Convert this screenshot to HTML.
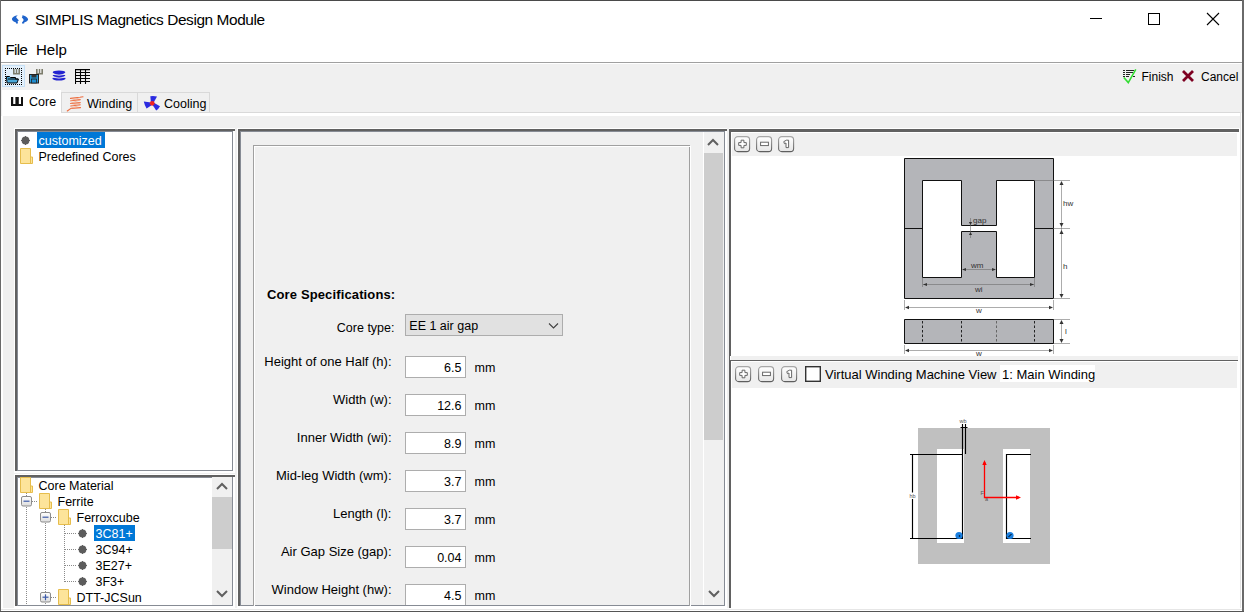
<!DOCTYPE html>
<html><head><meta charset="utf-8">
<style>
html,body{margin:0;padding:0;}
body{width:1244px;height:612px;overflow:hidden;position:relative;background:#fff;font-family:"Liberation Sans",sans-serif;color:#000;}
.a{position:absolute;}
.t{position:absolute;white-space:nowrap;line-height:1;}
.bg{background:#f0f0f0;}
.lbl{position:absolute;white-space:nowrap;line-height:1;font-size:12.5px;text-align:right;}
.fld{position:absolute;left:405px;width:59px;height:20px;background:#fff;border:1px solid #adadad;}
.fld span{position:absolute;right:4px;top:6px;font-size:12.5px;line-height:1;}
.mm{position:absolute;left:475px;font-size:12.5px;line-height:1;}
.zb{position:absolute;width:14px;height:14px;border:1px solid #7a7a7a;border-radius:4px;background:linear-gradient(#fcfcfc,#e6e6e6);}
</style></head><body>
<!-- window frame -->
<div class="a" style="left:0;top:0;width:1244px;height:1px;background:#4a4a4a"></div>
<div class="a" style="left:0;top:0;width:1px;height:612px;background:#6a6a6a"></div>
<div class="a" style="left:1242px;top:0;width:2px;height:612px;background:#6a6a6a"></div>

<!-- title -->
<svg class="a" style="left:10px;top:12px" width="20" height="14" viewBox="0 0 20 14"><polygon points="6.1,3.5 3.9,4.5 2.7,5.5 2.0,6.5 2.0,7.5 2.5,8.5 3.7,9.5 6.0,10.5 6.0,11.5 7.9,11.5 7.9,10.5 7.5,9.5 8.8,8.5 8.0,7.5 7.1,6.5 6.2,5.5 6.4,4.5 7.8,3.5" fill="#1f64cc"/><polygon points="12.1,3.5 12.4,4.5 11.8,5.5 12.8,6.5 13.5,7.5 13.5,8.5 12.8,9.5 12.0,10.5 12.0,11.5 14.2,11.5 14.2,10.5 16.5,9.5 17.6,8.5 18.1,7.5 17.8,6.5 17.0,5.5 15.8,4.5 13.7,3.5" fill="#1f64cc"/></svg>
<div class="t" style="left:35px;top:11.9px;font-size:15.4px;letter-spacing:-0.4px">SIMPLIS Magnetics Design Module</div>
<div class="a" style="left:1090px;top:18px;width:12px;height:1px;background:#000"></div>
<div class="a" style="left:1148px;top:13px;width:10px;height:10px;border:1px solid #000"></div>
<svg class="a" style="left:1206px;top:12px" width="14" height="14" viewBox="0 0 14 14"><path d="M1 1L13 13M13 1L1 13" stroke="#000" stroke-width="1.1"/></svg>

<!-- menu -->
<div class="t" style="left:5.5px;top:42px;font-size:15px;letter-spacing:-0.6px">File</div>
<div class="t" style="left:36px;top:42px;font-size:15px;">Help</div>
<div class="a" style="left:1px;top:62px;width:1241px;height:1px;background:#a0a0a0"></div>

<!-- toolbar / content bg -->
<div class="a bg" style="left:1px;top:64px;width:1241px;height:548px"></div>
<div class="a" style="left:2px;top:65px;width:21px;height:20px;background:#e3f0fb;border:1px solid #c6e0f6"></div>


<!-- toolbar icons -->
<svg class="a" style="left:5px;top:68px" width="17" height="17" viewBox="0 0 17 17">
<g fill="#000"><rect x="0" y="0" width="1" height="1"/><rect x="2" y="0" width="1" height="1"/><rect x="4" y="0" width="1" height="1"/><rect x="6" y="0" width="1" height="1"/><rect x="8" y="0" width="1" height="1"/><rect x="10" y="0" width="1" height="1"/><rect x="12" y="0" width="1" height="1"/><rect x="14" y="0" width="1" height="1"/><rect x="16" y="0" width="1" height="1"/>
<rect x="0" y="16" width="1" height="1"/><rect x="2" y="16" width="1" height="1"/><rect x="4" y="16" width="1" height="1"/><rect x="6" y="16" width="1" height="1"/><rect x="8" y="16" width="1" height="1"/><rect x="10" y="16" width="1" height="1"/><rect x="12" y="16" width="1" height="1"/><rect x="14" y="16" width="1" height="1"/><rect x="16" y="16" width="1" height="1"/>
<rect x="0" y="2" width="1" height="1"/><rect x="0" y="4" width="1" height="1"/><rect x="0" y="6" width="1" height="1"/><rect x="0" y="8" width="1" height="1"/><rect x="0" y="10" width="1" height="1"/><rect x="0" y="12" width="1" height="1"/><rect x="0" y="14" width="1" height="1"/>
<rect x="16" y="2" width="1" height="1"/><rect x="16" y="4" width="1" height="1"/><rect x="16" y="6" width="1" height="1"/><rect x="16" y="8" width="1" height="1"/><rect x="16" y="10" width="1" height="1"/><rect x="16" y="12" width="1" height="1"/><rect x="16" y="14" width="1" height="1"/></g>
<path d="M8 1h1.6v4h1.2v-4h1.4v4h1.2v-4h1.6v5.6h-7z" fill="#7c7c6c"/>
<path d="M1.5 8.5h3l1 1h5v1.5h3l-1.5 4h-10z" fill="#4aa8d8" stroke="#000" stroke-width="1"/>
<path d="M3 11h10" stroke="#000" stroke-width="1"/>
</svg>
<svg class="a" style="left:29px;top:68px" width="16" height="16" viewBox="0 0 16 16">
<path d="M7 1h1.6v4h1.2v-4h1.4v4h1.2v-4h1.6v5.6h-7z" fill="#7c7c6c"/>
<rect x="0.5" y="6.5" width="9" height="8.5" fill="#2a9ad6" stroke="#222" stroke-width="1"/>
<rect x="2.5" y="7" width="5" height="2.5" fill="#333"/>
<rect x="2.5" y="11" width="5" height="4" fill="#1e8cd0" stroke="#222" stroke-width="0.8"/>
</svg>
<svg class="a" style="left:52px;top:70px" width="14" height="12" viewBox="0 0 14 12">
<ellipse cx="7" cy="2.3" rx="6.3" ry="1.9" fill="#2424d0"/>
<ellipse cx="7" cy="5.6" rx="6.3" ry="1.5" fill="#2424d0"/>
<ellipse cx="7" cy="8.6" rx="6.6" ry="1.9" fill="#2424d0"/>
<path d="M1 4.3q6 1.8 12 0M1 7.2q6 1.8 12 0" stroke="#f0f0f0" stroke-width="0.9" fill="none"/>
</svg>
<svg class="a" style="left:75px;top:69px" width="16" height="16" viewBox="0 0 16 16">
<g stroke="#000" stroke-width="1.1" fill="none"><path d="M0.5 0v15M5.5 0v15M10.5 0v15"/><path d="M0 0.6h15M0 3.5h15M0 6.5h15M0 9.5h15M0 12.5h15"/></g>
</svg>
<!-- finish / cancel icons -->
<svg class="a" style="left:1122px;top:68px" width="16" height="17" viewBox="0 0 16 17">
<g fill="#222"><rect x="1" y="2" width="2" height="1"/><rect x="4" y="2" width="8" height="1"/><rect x="1" y="4" width="2" height="1"/><rect x="4" y="4" width="7" height="1"/><rect x="1" y="6" width="2" height="1"/><rect x="4" y="6" width="4" height="1"/><rect x="1" y="8" width="2" height="1"/><rect x="4" y="8" width="3" height="1"/><rect x="11" y="8" width="2" height="1"/></g>
<path d="M1.8 9.5L6.3 14.6L13.8 1.4" stroke="#33dd33" stroke-width="1.6" fill="none"/>
</svg>
<svg class="a" style="left:1181px;top:69px" width="14" height="14" viewBox="0 0 14 14">
<path d="M2 2L12 12M12 2L2 12" stroke="#7d0021" stroke-width="2.8"/>
</svg>
<!-- finish / cancel -->
<div class="t" style="left:1141.5px;top:71px;font-size:12px;">Finish</div>
<div class="t" style="left:1201px;top:71px;font-size:12px;">Cancel</div>

<!-- tabs -->
<div class="a" style="left:2px;top:90px;width:59px;height:26px;background:#fff"></div>
<div class="a" style="left:61px;top:92px;width:75px;height:20px;border:1px solid #d9d9d9;border-bottom:none"></div>
<div class="a" style="left:137px;top:92px;width:71px;height:20px;border:1px solid #d9d9d9;border-bottom:none"></div>
<div class="a" style="left:61px;top:112px;width:1180px;height:1px;background:#d9d9d9"></div>
<div class="a" style="left:2px;top:113px;width:1238px;height:3px;background:#fff"></div>
<div class="a" style="left:1240px;top:112px;width:1px;height:500px;background:#e3e3e3"></div>
<div class="a" style="left:1241px;top:113px;width:1px;height:498px;background:#fff"></div>
<div class="a" style="left:1px;top:116px;width:2px;height:493px;background:#fff"></div>
<div class="t" style="left:29px;top:96px;font-size:12.5px;">Core</div>
<div class="t" style="left:87px;top:98px;font-size:12.5px;">Winding</div>
<div class="t" style="left:164px;top:98px;font-size:12.5px;">Cooling</div>


<!-- ===== left top tree ===== -->
<div class="a" style="left:14px;top:128px;width:221px;height:345px;background:#fff"></div>
<div class="a" style="left:15px;top:129px;width:220px;height:2px;background:#616161"></div>
<div class="a" style="left:15px;top:129px;width:2px;height:342px;background:#616161"></div>
<div class="a" style="left:17px;top:131px;width:216px;height:1px;background:#868b94"></div>
<div class="a" style="left:17px;top:131px;width:1px;height:340px;background:#868b94"></div>
<div class="a" style="left:232px;top:131px;width:1px;height:340px;background:#868b94"></div>
<div class="a" style="left:17px;top:470px;width:216px;height:1px;background:#868b94"></div>
<!-- ===== left bottom tree ===== -->
<div class="a" style="left:14px;top:474px;width:221px;height:134px;background:#fff"></div>
<div class="a" style="left:15px;top:475px;width:220px;height:2px;background:#616161"></div>
<div class="a" style="left:15px;top:475px;width:2px;height:131px;background:#616161"></div>
<div class="a" style="left:17px;top:477px;width:216px;height:1px;background:#868b94"></div>
<div class="a" style="left:17px;top:477px;width:1px;height:129px;background:#868b94"></div>
<div class="a" style="left:232px;top:477px;width:1px;height:129px;background:#868b94"></div>
<div class="a" style="left:17px;top:605px;width:216px;height:1px;background:#868b94"></div>
<svg class="a" style="left:20px;top:135px" width="11" height="11" viewBox="0 0 11 11"><circle cx="5.5" cy="5.5" r="3.9" fill="#5c5c5c"/><path d="M5.5 1v9M1 5.5h9" stroke="#5c5c5c" stroke-width="1"/></svg>
<div class="a" style="left:37px;top:132px;width:68px;height:16px;background:#0078d7"></div>
<div class="t" style="left:38.5px;top:135.2px;font-size:12.5px;color:#fff">customized</div>
<svg class="a" style="left:20px;top:148px" width="14" height="16" viewBox="0 0 14 16"><defs><linearGradient id="fg" x1="0" y1="0" x2="1" y2="1"><stop offset="0" stop-color="#fff0b8"/><stop offset="1" stop-color="#fcdc80"/></linearGradient></defs><path d="M0.5 0.5h10v8.5h2v6.5h-12z" fill="#fde49a" stroke="#e6bd4c" stroke-width="1"/><path d="M10.5 9v6.5" stroke="#e6bd4c" stroke-width="1"/></svg>
<div class="t" style="left:38.5px;top:151.2px;font-size:12.5px;color:#000">Predefined Cores</div>
<div class="a" style="left:0;top:0;width:1244px;height:605px;overflow:hidden">
<div class="a" style="left:26px;top:493px;width:1px;height:112px;background:repeating-linear-gradient(#8a8a8a 0 1px,transparent 1px 2px)"></div>
<svg class="a" style="left:20px;top:477px" width="14" height="16" viewBox="0 0 14 16"><defs><linearGradient id="fg" x1="0" y1="0" x2="1" y2="1"><stop offset="0" stop-color="#fff0b8"/><stop offset="1" stop-color="#fcdc80"/></linearGradient></defs><path d="M0.5 0.5h10v8.5h2v6.5h-12z" fill="#fde49a" stroke="#e6bd4c" stroke-width="1"/><path d="M10.5 9v6.5" stroke="#e6bd4c" stroke-width="1"/></svg>
<div class="t" style="left:38.5px;top:480.2px;font-size:12.5px;color:#000">Core Material</div>
<div class="a" style="left:32px;top:501px;width:6px;height:1px;background:repeating-linear-gradient(90deg,#8a8a8a 0 1px,transparent 1px 2px)"></div>
<svg class="a" style="left:21px;top:496px" width="12" height="11" viewBox="0 0 12 11"><defs><linearGradient id="eb" x1="0" y1="0" x2="0" y2="1"><stop offset="0" stop-color="#ffffff"/><stop offset="1" stop-color="#dcdcdc"/></linearGradient></defs><rect x="0.5" y="0.5" width="10" height="9.5" rx="1.5" fill="url(#eb)" stroke="#8c8c8c"/><path d="M2.5 5.2h6" stroke="#3c5aa8" stroke-width="1.2"/></svg>
<svg class="a" style="left:39px;top:493px" width="14" height="16" viewBox="0 0 14 16"><defs><linearGradient id="fg" x1="0" y1="0" x2="1" y2="1"><stop offset="0" stop-color="#fff0b8"/><stop offset="1" stop-color="#fcdc80"/></linearGradient></defs><path d="M0.5 0.5h10v8.5h2v6.5h-12z" fill="#fde49a" stroke="#e6bd4c" stroke-width="1"/><path d="M10.5 9v6.5" stroke="#e6bd4c" stroke-width="1"/></svg>
<div class="t" style="left:57.5px;top:496.2px;font-size:12.5px;color:#000">Ferrite</div>
<div class="a" style="left:45px;top:509px;width:1px;height:96px;background:repeating-linear-gradient(#8a8a8a 0 1px,transparent 1px 2px)"></div>
<div class="a" style="left:51px;top:517px;width:6px;height:1px;background:repeating-linear-gradient(90deg,#8a8a8a 0 1px,transparent 1px 2px)"></div>
<svg class="a" style="left:40px;top:512px" width="12" height="11" viewBox="0 0 12 11"><defs><linearGradient id="eb" x1="0" y1="0" x2="0" y2="1"><stop offset="0" stop-color="#ffffff"/><stop offset="1" stop-color="#dcdcdc"/></linearGradient></defs><rect x="0.5" y="0.5" width="10" height="9.5" rx="1.5" fill="url(#eb)" stroke="#8c8c8c"/><path d="M2.5 5.2h6" stroke="#3c5aa8" stroke-width="1.2"/></svg>
<svg class="a" style="left:58px;top:509px" width="14" height="16" viewBox="0 0 14 16"><defs><linearGradient id="fg" x1="0" y1="0" x2="1" y2="1"><stop offset="0" stop-color="#fff0b8"/><stop offset="1" stop-color="#fcdc80"/></linearGradient></defs><path d="M0.5 0.5h10v8.5h2v6.5h-12z" fill="#fde49a" stroke="#e6bd4c" stroke-width="1"/><path d="M10.5 9v6.5" stroke="#e6bd4c" stroke-width="1"/></svg>
<div class="t" style="left:76.5px;top:512.2px;font-size:12.5px;color:#000">Ferroxcube</div>
<div class="a" style="left:64px;top:525px;width:1px;height:57px;background:repeating-linear-gradient(#8a8a8a 0 1px,transparent 1px 2px)"></div>
<div class="a" style="left:65px;top:533px;width:11px;height:1px;background:repeating-linear-gradient(90deg,#8a8a8a 0 1px,transparent 1px 2px)"></div>
<svg class="a" style="left:77px;top:528px" width="11" height="11" viewBox="0 0 11 11"><circle cx="5.5" cy="5.5" r="3.9" fill="#5c5c5c"/><path d="M5.5 1v9M1 5.5h9" stroke="#5c5c5c" stroke-width="1"/></svg>
<div class="a" style="left:94px;top:525px;width:41px;height:16px;background:#0078d7"></div>
<div class="t" style="left:95.5px;top:528.2px;font-size:12.5px;color:#fff">3C81+</div>
<div class="a" style="left:65px;top:549px;width:11px;height:1px;background:repeating-linear-gradient(90deg,#8a8a8a 0 1px,transparent 1px 2px)"></div>
<svg class="a" style="left:77px;top:544px" width="11" height="11" viewBox="0 0 11 11"><circle cx="5.5" cy="5.5" r="3.9" fill="#5c5c5c"/><path d="M5.5 1v9M1 5.5h9" stroke="#5c5c5c" stroke-width="1"/></svg>
<div class="t" style="left:95.5px;top:544.2px;font-size:12.5px;color:#000">3C94+</div>
<div class="a" style="left:65px;top:565px;width:11px;height:1px;background:repeating-linear-gradient(90deg,#8a8a8a 0 1px,transparent 1px 2px)"></div>
<svg class="a" style="left:77px;top:560px" width="11" height="11" viewBox="0 0 11 11"><circle cx="5.5" cy="5.5" r="3.9" fill="#5c5c5c"/><path d="M5.5 1v9M1 5.5h9" stroke="#5c5c5c" stroke-width="1"/></svg>
<div class="t" style="left:95.5px;top:560.2px;font-size:12.5px;color:#000">3E27+</div>
<div class="a" style="left:65px;top:581px;width:11px;height:1px;background:repeating-linear-gradient(90deg,#8a8a8a 0 1px,transparent 1px 2px)"></div>
<svg class="a" style="left:77px;top:576px" width="11" height="11" viewBox="0 0 11 11"><circle cx="5.5" cy="5.5" r="3.9" fill="#5c5c5c"/><path d="M5.5 1v9M1 5.5h9" stroke="#5c5c5c" stroke-width="1"/></svg>
<div class="t" style="left:95.5px;top:576.2px;font-size:12.5px;color:#000">3F3+</div>
<div class="a" style="left:51px;top:597px;width:6px;height:1px;background:repeating-linear-gradient(90deg,#8a8a8a 0 1px,transparent 1px 2px)"></div>
<svg class="a" style="left:40px;top:592px" width="12" height="11" viewBox="0 0 12 11"><defs><linearGradient id="eb" x1="0" y1="0" x2="0" y2="1"><stop offset="0" stop-color="#ffffff"/><stop offset="1" stop-color="#dcdcdc"/></linearGradient></defs><rect x="0.5" y="0.5" width="10" height="9.5" rx="1.5" fill="url(#eb)" stroke="#8c8c8c"/><path d="M2.5 5.2h6" stroke="#3c5aa8" stroke-width="1.2"/><path d="M5.5 2.3v6" stroke="#3c5aa8" stroke-width="1.2"/></svg>
<svg class="a" style="left:58px;top:589px" width="14" height="16" viewBox="0 0 14 16"><defs><linearGradient id="fg" x1="0" y1="0" x2="1" y2="1"><stop offset="0" stop-color="#fff0b8"/><stop offset="1" stop-color="#fcdc80"/></linearGradient></defs><path d="M0.5 0.5h10v8.5h2v6.5h-12z" fill="#fde49a" stroke="#e6bd4c" stroke-width="1"/><path d="M10.5 9v6.5" stroke="#e6bd4c" stroke-width="1"/></svg>
<div class="t" style="left:76.5px;top:592.2px;font-size:12.5px;color:#000">DTT-JCSun</div>
</div>
<!-- scrollbar bottom tree -->
<div class="a bg" style="left:212px;top:477px;width:20px;height:128px"></div>
<div class="a" style="left:212px;top:497px;width:20px;height:52px;background:#cdcdcd"></div>
<svg class="a" style="left:216px;top:482px" width="12" height="9" viewBox="0 0 12 9"><path d="M1 7L6 2L11 7" stroke="#606060" stroke-width="2" fill="none"/></svg>
<svg class="a" style="left:216px;top:589px" width="12" height="9" viewBox="0 0 12 9"><path d="M1 2L6 7L11 2" stroke="#606060" stroke-width="2" fill="none"/></svg>

<!-- ===== middle panel ===== -->
<div class="a" style="left:237px;top:128px;width:490px;height:480px;background:#fff"></div>
<div class="a" style="left:241px;top:132px;width:483px;height:473px;background:#f0f0f0"></div>
<div class="a" style="left:238px;top:129px;width:489px;height:2px;background:#616161"></div>
<div class="a" style="left:238px;top:129px;width:2px;height:477px;background:#616161"></div>
<div class="a" style="left:240px;top:131px;width:485px;height:1px;background:#868b94"></div>
<div class="a" style="left:240px;top:131px;width:1px;height:475px;background:#868b94"></div>
<div class="a" style="left:724px;top:131px;width:1px;height:475px;background:#868b94"></div>
<div class="a" style="left:240px;top:605px;width:485px;height:1px;background:#868b94"></div>
<!-- etched titled border -->
<div class="a" style="left:253px;top:145px;width:435px;height:460px;border-left:1px solid #a0a0a0;border-top:1px solid #a0a0a0;border-right:1px solid #a0a0a0"></div>
<div class="a" style="left:254px;top:146px;width:435px;height:459px;border-left:1px solid #fff;border-top:1px solid #fff;border-right:1px solid #fff"></div>
<div class="a" style="left:0;top:0;width:703px;height:605px;overflow:hidden">
<div class="t" style="left:267.0px;top:288.4px;font-size:13px;color:#000;font-weight:bold;letter-spacing:0.13px">Core Specifications:</div>
<div class="t" style="left:394.5px;transform:translateX(-100%);top:322.1px;font-size:12.5px;color:#000;font-weight:normal">Core type:</div>
<div class="a" style="left:405px;top:314px;width:156px;height:20px;background:#e1e1e1;border:1px solid #adadad"></div>
<div class="t" style="left:409.3px;top:319.6px;font-size:12.5px;color:#000;font-weight:normal">EE 1 air gap</div>
<svg class="a" style="left:548px;top:321px" width="12" height="9" viewBox="0 0 12 9"><path d="M1 2.5L5.5 7L10 2.5" stroke="#404040" stroke-width="1.1" fill="none"/></svg>
<div class="t" style="left:391.5px;transform:translateX(-100%);top:355.2px;font-size:13px;color:#000;font-weight:normal">Height of one Half (h):</div>
<div class="fld" style="top:356px"></div>
<div class="t" style="left:461.5px;transform:translateX(-100%);top:361.7px;font-size:12.5px;color:#000;font-weight:normal">6.5</div>
<div class="t" style="left:474.6px;top:361.7px;font-size:12.5px;color:#000;font-weight:normal">mm</div>
<div class="t" style="left:391.5px;transform:translateX(-100%);top:393.2px;font-size:13px;color:#000;font-weight:normal">Width (w):</div>
<div class="fld" style="top:394px"></div>
<div class="t" style="left:461.5px;transform:translateX(-100%);top:399.7px;font-size:12.5px;color:#000;font-weight:normal">12.6</div>
<div class="t" style="left:474.6px;top:399.7px;font-size:12.5px;color:#000;font-weight:normal">mm</div>
<div class="t" style="left:391.5px;transform:translateX(-100%);top:431.2px;font-size:13px;color:#000;font-weight:normal">Inner Width (wi):</div>
<div class="fld" style="top:432px"></div>
<div class="t" style="left:461.5px;transform:translateX(-100%);top:437.7px;font-size:12.5px;color:#000;font-weight:normal">8.9</div>
<div class="t" style="left:474.6px;top:437.7px;font-size:12.5px;color:#000;font-weight:normal">mm</div>
<div class="t" style="left:391.5px;transform:translateX(-100%);top:469.2px;font-size:13px;color:#000;font-weight:normal">Mid-leg Width (wm):</div>
<div class="fld" style="top:470px"></div>
<div class="t" style="left:461.5px;transform:translateX(-100%);top:475.7px;font-size:12.5px;color:#000;font-weight:normal">3.7</div>
<div class="t" style="left:474.6px;top:475.7px;font-size:12.5px;color:#000;font-weight:normal">mm</div>
<div class="t" style="left:391.5px;transform:translateX(-100%);top:507.2px;font-size:13px;color:#000;font-weight:normal">Length (l):</div>
<div class="fld" style="top:508px"></div>
<div class="t" style="left:461.5px;transform:translateX(-100%);top:513.7px;font-size:12.5px;color:#000;font-weight:normal">3.7</div>
<div class="t" style="left:474.6px;top:513.7px;font-size:12.5px;color:#000;font-weight:normal">mm</div>
<div class="t" style="left:391.5px;transform:translateX(-100%);top:545.2px;font-size:13px;color:#000;font-weight:normal">Air Gap Size (gap):</div>
<div class="fld" style="top:546px"></div>
<div class="t" style="left:461.5px;transform:translateX(-100%);top:551.7px;font-size:12.5px;color:#000;font-weight:normal">0.04</div>
<div class="t" style="left:474.6px;top:551.7px;font-size:12.5px;color:#000;font-weight:normal">mm</div>
<div class="t" style="left:391.5px;transform:translateX(-100%);top:583.2px;font-size:13px;color:#000;font-weight:normal">Window Height (hw):</div>
<div class="fld" style="top:584px"></div>
<div class="t" style="left:461.5px;transform:translateX(-100%);top:589.7px;font-size:12.5px;color:#000;font-weight:normal">4.5</div>
<div class="t" style="left:474.6px;top:589.7px;font-size:12.5px;color:#000;font-weight:normal">mm</div>
</div>
<!-- scrollbar -->
<div class="a" style="left:703px;top:132px;width:1px;height:473px;background:#fff"></div>
<div class="a" style="left:704px;top:153px;width:19px;height:287px;background:#cdcdcd"></div>
<svg class="a" style="left:707px;top:138px" width="12" height="9" viewBox="0 0 12 9"><path d="M1 7L6 2L11 7" stroke="#606060" stroke-width="2" fill="none"/></svg>
<svg class="a" style="left:708px;top:589px" width="12" height="9" viewBox="0 0 12 9"><path d="M1 2L6 7L11 2" stroke="#606060" stroke-width="2" fill="none"/></svg>

<!-- ===== right top panel ===== -->
<div class="a" style="left:729px;top:128px;width:511px;height:481px;background:#fff"></div>
<div class="a" style="left:729px;top:129px;width:510px;height:3px;background:#616161"></div>
<div class="a" style="left:729px;top:129px;width:2px;height:227px;background:#616161"></div>
<div class="a" style="left:732px;top:133px;width:505px;height:23px;background:#f0f0f0"></div>
<div class="a" style="left:729px;top:356px;width:1px;height:253px;background:#616161"></div>
<div class="a" style="left:731px;top:356px;width:507px;height:4px;background:#f0f0f0"></div>
<!-- ===== right bottom panel ===== -->
<div class="a" style="left:729px;top:360px;width:509px;height:1px;background:#616161"></div>
<div class="a" style="left:729px;top:360px;width:2px;height:249px;background:#616161"></div>
<div class="a" style="left:732px;top:362px;width:505px;height:26px;background:#f0f0f0"></div>
<div class="a" style="left:1000px;top:365px;width:95px;height:17px;background:#fff"></div>

<svg class="a" style="left:734px;top:136px" width="17" height="17" viewBox="0 0 17 17"><defs><linearGradient id="zg734136" x1="0" y1="0" x2="0" y2="1"><stop offset="0" stop-color="#a8a8a8"/><stop offset="1" stop-color="#5e5e5e"/></linearGradient><linearGradient id="zf734136" x1="0" y1="0" x2="0" y2="1"><stop offset="0" stop-color="#ffffff"/><stop offset="1" stop-color="#e6e6e6"/></linearGradient></defs><rect x="0.6" y="0.6" width="15" height="15" rx="3.2" fill="url(#zf734136)" stroke="url(#zg734136)" stroke-width="1.1"/><path d="M7.1 4.2h2.8v2.4h2.4v2.8h-2.4v2.4h-2.8v-2.4h-2.4v-2.8h2.4z" fill="#fff" stroke="#606060" stroke-width="0.95"/></svg>
<svg class="a" style="left:756px;top:136px" width="17" height="17" viewBox="0 0 17 17"><defs><linearGradient id="zg756136" x1="0" y1="0" x2="0" y2="1"><stop offset="0" stop-color="#a8a8a8"/><stop offset="1" stop-color="#5e5e5e"/></linearGradient><linearGradient id="zf756136" x1="0" y1="0" x2="0" y2="1"><stop offset="0" stop-color="#ffffff"/><stop offset="1" stop-color="#e6e6e6"/></linearGradient></defs><rect x="0.6" y="0.6" width="15" height="15" rx="3.2" fill="url(#zf756136)" stroke="url(#zg756136)" stroke-width="1.1"/><rect x="4.6" y="6.2" width="7.8" height="3.4" fill="#fff" stroke="#606060" stroke-width="0.95"/></svg>
<svg class="a" style="left:778px;top:136px" width="17" height="17" viewBox="0 0 17 17"><defs><linearGradient id="zg778136" x1="0" y1="0" x2="0" y2="1"><stop offset="0" stop-color="#a8a8a8"/><stop offset="1" stop-color="#5e5e5e"/></linearGradient><linearGradient id="zf778136" x1="0" y1="0" x2="0" y2="1"><stop offset="0" stop-color="#ffffff"/><stop offset="1" stop-color="#e6e6e6"/></linearGradient></defs><rect x="0.6" y="0.6" width="15" height="15" rx="3.2" fill="url(#zf778136)" stroke="url(#zg778136)" stroke-width="1.1"/><path d="M5.8 5.6l2.6-1.4h2.2v7.4h-2.6v-4.6l-1.6 0.7z" fill="#fff" stroke="#606060" stroke-width="0.95"/></svg>
<svg class="a" style="left:735px;top:366px" width="17" height="17" viewBox="0 0 17 17"><defs><linearGradient id="zg735366" x1="0" y1="0" x2="0" y2="1"><stop offset="0" stop-color="#a8a8a8"/><stop offset="1" stop-color="#5e5e5e"/></linearGradient><linearGradient id="zf735366" x1="0" y1="0" x2="0" y2="1"><stop offset="0" stop-color="#ffffff"/><stop offset="1" stop-color="#e6e6e6"/></linearGradient></defs><rect x="0.6" y="0.6" width="15" height="15" rx="3.2" fill="url(#zf735366)" stroke="url(#zg735366)" stroke-width="1.1"/><path d="M7.1 4.2h2.8v2.4h2.4v2.8h-2.4v2.4h-2.8v-2.4h-2.4v-2.8h2.4z" fill="#fff" stroke="#606060" stroke-width="0.95"/></svg>
<svg class="a" style="left:758px;top:366px" width="17" height="17" viewBox="0 0 17 17"><defs><linearGradient id="zg758366" x1="0" y1="0" x2="0" y2="1"><stop offset="0" stop-color="#a8a8a8"/><stop offset="1" stop-color="#5e5e5e"/></linearGradient><linearGradient id="zf758366" x1="0" y1="0" x2="0" y2="1"><stop offset="0" stop-color="#ffffff"/><stop offset="1" stop-color="#e6e6e6"/></linearGradient></defs><rect x="0.6" y="0.6" width="15" height="15" rx="3.2" fill="url(#zf758366)" stroke="url(#zg758366)" stroke-width="1.1"/><rect x="4.6" y="6.2" width="7.8" height="3.4" fill="#fff" stroke="#606060" stroke-width="0.95"/></svg>
<svg class="a" style="left:781px;top:366px" width="17" height="17" viewBox="0 0 17 17"><defs><linearGradient id="zg781366" x1="0" y1="0" x2="0" y2="1"><stop offset="0" stop-color="#a8a8a8"/><stop offset="1" stop-color="#5e5e5e"/></linearGradient><linearGradient id="zf781366" x1="0" y1="0" x2="0" y2="1"><stop offset="0" stop-color="#ffffff"/><stop offset="1" stop-color="#e6e6e6"/></linearGradient></defs><rect x="0.6" y="0.6" width="15" height="15" rx="3.2" fill="url(#zf781366)" stroke="url(#zg781366)" stroke-width="1.1"/><path d="M5.8 5.6l2.6-1.4h2.2v7.4h-2.6v-4.6l-1.6 0.7z" fill="#fff" stroke="#606060" stroke-width="0.95"/></svg>
<svg class="a" style="left:805px;top:366px" width="16" height="16" viewBox="0 0 16 16"><rect x="0.7" y="0.7" width="14.6" height="14.6" fill="#fff" stroke="#333" stroke-width="1.4"/></svg>
<div class="t" style="left:825px;top:367.5px;font-size:13px;">Virtual Winding Machine View</div>
<div class="t" style="left:1002px;top:367.5px;font-size:13px;">1: Main Winding</div>
<svg class="a" style="left:880px;top:150px" width="220" height="210" viewBox="880 150 220 210">
<g stroke="#111" stroke-width="1" fill="#b4b5b9">
<path d="M904.5 158.5H1053.5V298.5H904.5Z"/>
</g>
<g fill="#fff" stroke="#111" stroke-width="1">
<path d="M922.5 180.5H961.5V225.5H996.5V180.5H1034.5V277.5H996.5V231.5H961.5V277.5H922.5Z"/>
</g>
<path d="M904.5 228.5H922.5M1034.5 228.5H1053.5" stroke="#111" stroke-width="1"/>
<g stroke="#666" stroke-width="0.55" fill="none">
<path d="M1034 180.5H1070M1053 228.5H1070M1053 298.5H1070M1061.5 182V297"/>
<path d="M904.5 300V310M1053.5 300V310M906 307.5H1052"/>
<path d="M963 269.5H995"/>
<path d="M923 284.5H1034M922.5 278V287M1034.5 278V287"/>
<path d="M970.5 218V238"/>
<path d="M904.5 345V354M1053.5 345V354M906 350.5H1052M1053 319.5H1070M1053 343.5H1070M1061.5 321V342"/>
</g>
<g fill="#333">
<path d="M1061.5 181l-2 4h4z M1061.5 227l-2-4h4z M1061.5 230l-2 4h4z M1061.5 298l-2-4h4z"/>
<path d="M905 307.5l4-1.8v3.6z M1053 307.5l-4-1.8v3.6z M905 350.5l4-1.8v3.6z M1053 350.5l-4-1.8v3.6z"/>
<path d="M962 269.5l4-1.6v3.2z M996 269.5l-4-1.6v3.2z M923 284.5l4-1.6v3.2z M1034 284.5l-4-1.6v3.2z"/>
<path d="M970.5 225l-1.6-3h3.2z M970.5 232l-1.6 3h3.2z"/>
<path d="M1061.5 320l-2 4h4z M1061.5 343l-2-4h4z"/>
</g>
<path d="M904.5 319.5H1053.5V343.5H904.5Z" fill="#b4b5b9" stroke="#111" stroke-width="1"/>
<g stroke="#222" stroke-width="1" stroke-dasharray="2.5 2">
<path d="M922.5 321V342M961.5 321V342M1034.5 321V342"/>
</g>
<path d="M996.5 321V342" stroke="#666" stroke-width="1" stroke-dasharray="2.5 2"/>
<g font-family="Liberation Sans" font-size="8" fill="#333">
<text x="973" y="223">gap</text>
<text x="971" y="268">wm</text>
<text x="975" y="292">wi</text>
<text x="976" y="313">w</text>
<text x="976" y="356">w</text>
<text x="1063" y="206">hw</text>
<text x="1063" y="269">h</text>
<text x="1065" y="334">l</text>
</g>
</svg>
<svg class="a" style="left:900px;top:410px" width="160" height="160" viewBox="900 410 160 160">
<rect x="918" y="428" width="132" height="136" fill="#c0c0c0"/>
<rect x="937" y="449" width="27" height="94" fill="#fff"/>
<rect x="1003" y="449" width="27" height="94" fill="#fff"/>
<g stroke="#000" stroke-width="1.15" fill="none">
<path d="M910 454.5H962.5V538.5H910"/>
<path d="M912.5 454.5V492.5M912.5 499V538.5"/>
<path d="M1031 454.5H1006.5V538.5H1031"/>
<path d="M962.5 424V454M965.5 424V454M960.5 427.5H967.5"/>
</g>
<g stroke="#ff0000" stroke-width="1.3" fill="none"><path d="M984.5 462V497.5H1019"/></g>
<g fill="#ff0000"><path d="M984.5 460l-2.2 5h4.4z M1021 497.5l-5-2.2v4.4z"/></g>
<circle cx="959" cy="535.5" r="3.6" fill="#1a7fe0"/>
<circle cx="1010" cy="535.5" r="3.6" fill="#1a7fe0"/>
<path d="M1008.5 537l3-3" stroke="#000" stroke-width="1"/>
<circle cx="959.5" cy="536" r="0.8" fill="#000"/>
<g font-family="Liberation Sans" font-size="5.5" fill="#555"><text x="959.5" y="422.5">wb</text><text x="980.5" y="494.5">F</text><text x="985" y="501">a</text><text x="909.5" y="498.3">hb</text></g>
</svg>
<!-- tab icons -->
<svg class="a" style="left:11px;top:97px" width="12" height="9" viewBox="0 0 12 9">
<path d="M0 0h2.2v7h2.2v-7h3.4v7h2.2v-7h2v9h-12z" fill="#111"/>
</svg>
<svg class="a" style="left:66px;top:95px" width="18" height="17" viewBox="0 0 18 17">
<g stroke="#ec6434" stroke-width="1.15" fill="none" stroke-linecap="round" opacity="0.95"><path d="M4.5 3.4L14 2.3L17 1.8M4.8 5.8L14.2 4.6M4.5 8.5L14.2 7.6M4.8 11L14.2 9.8M4.5 13.5L14.5 12.6M4.6 13.6L1.3 16"/></g>
<g stroke="#f2a080" stroke-width="0.8" fill="none" opacity="0.8"><path d="M14 2.6L4.8 5.6M14.2 4.9L4.5 8.3M14.2 7.9L4.8 10.8M14.2 10.1L4.5 13.3"/></g>
</svg>
<svg class="a" style="left:143px;top:95px" width="18" height="17" viewBox="0 0 18 17">
<path d="M8 8.3L7.3 1.3Q10.5 0.6 14 1.6L10.3 8.3z" fill="#2b2be0"/>
<path d="M8.2 7.5L0.8 6.6Q1.6 10.5 3.6 13.6L9.6 9.4z" fill="#2b2be0"/>
<path d="M9.2 9.6L13.2 15.6Q15.6 14 17 11.2L10 7.2z" fill="#2b2be0"/>
<circle cx="9.2" cy="8.3" r="2.4" fill="#ee2222"/>
</svg>


<!-- bottom strip -->
<div class="a" style="left:1px;top:608px;width:1241px;height:4px;background:#fff"></div>
<div class="a" style="left:1px;top:609px;width:1241px;height:1px;background:#e6e6e6"></div>
<div class="a" style="left:0;top:611px;width:1244px;height:1px;background:#555"></div>

</body></html>
